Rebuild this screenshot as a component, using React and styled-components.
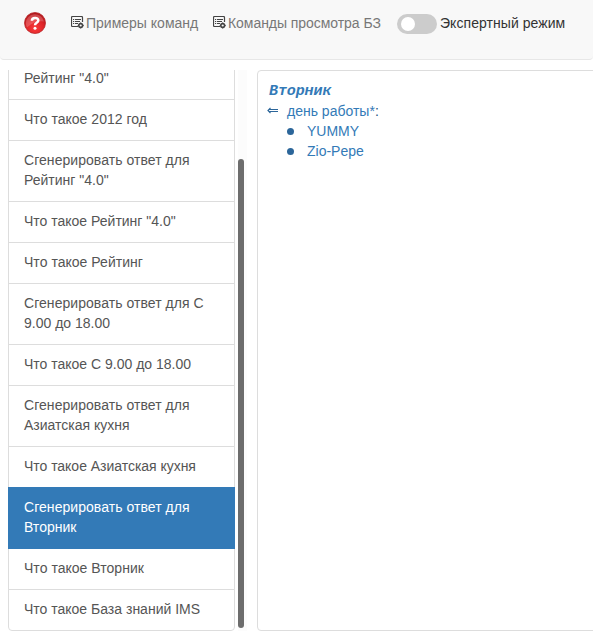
import React from 'react';
import styled, { createGlobalStyle } from 'styled-components';

const GlobalStyle = createGlobalStyle`
  * { box-sizing: border-box; }
  body {
    margin: 0;
    overflow: hidden;
    background: #fff;
    color: #333;
    font: 14px/20px "Helvetica Neue", "Liberation Sans", Arial, sans-serif;
  }
`;

const Page = styled.div`
  width: 593px;
  height: 641px;
  overflow: hidden;
`;

const Navbar = styled.header`
  display: flex;
  align-items: flex-start;
  height: 60px;
  padding: 12px 0 0 24px;
  background: #f8f8f8;
  border-bottom: 1px solid #e7e7e7;
  border-radius: 0 0 4px 4px;
  white-space: nowrap;
`;

const HelpIcon = styled.svg`
  width: 22px;
  height: 22px;
  flex: none;
  margin-right: 25px;
`;

const NavLink = styled.a`
  display: flex;
  flex: none;
  width: ${(p) => p.$width}px;
  margin-top: 1px;
  color: #777;
  letter-spacing: ${(p) => p.$spacing || 0}px;
`;

const CommandIcon = styled.svg`
  width: 13px;
  height: 13px;
  flex: none;
  margin: 3px 2px 0 0;
`;

const Switch = styled.span`
  flex: none;
  width: 40px;
  height: 20px;
  margin: 2px 3px 0 0;
  padding: 3px 4px;
  border-radius: 10px;
  background: #ccc;
`;

const Knob = styled.span`
  display: block;
  width: 14px;
  height: 14px;
  border-radius: 50%;
  background: #fff;
`;

const SwitchLabel = styled.span`
  margin-top: 1px;
  letter-spacing: 0.06px;
`;

const Content = styled.main`
  display: flex;
  height: 561px;
  margin-top: 10px;
  padding-left: 8px;
`;

const History = styled.div`
  display: flex;
  flex-direction: column;
  justify-content: flex-end;
  flex: none;
  width: 227px;
  height: 561px;
  overflow: hidden;
`;

const HistoryItem = styled.a`
  flex: none;
  padding: 9px 15px 11px;
  border: 1px solid ${(p) => (p.$active ? '#337ab7' : '#ddd')};
  background: ${(p) => (p.$active ? '#337ab7' : '#fff')};
  color: ${(p) => (p.$active ? '#fff' : '#555')};
  position: relative;
  z-index: ${(p) => (p.$active ? 2 : 0)};
  white-space: nowrap;
  & + & { margin-top: -1px; }
  &:last-child { border-radius: 0 0 4px 4px; }
`;

const Line = styled.span`
  display: block;
  letter-spacing: ${(p) => p.$spacing || 0}px;
`;

const ScrollTrack = styled.div`
  flex: none;
  width: 9px;
  height: 561px;
  margin-left: 3px;
  padding-top: 89px;
  background: #fcfcfc;
`;

const ScrollThumb = styled.div`
  width: 6px;
  height: 469px;
  border-radius: 3px;
  background: #6d6d6d;
`;

const Answer = styled.section`
  flex: none;
  width: 360px;
  margin-left: 10px;
  padding: 11px 9px;
  border: 1px solid #ddd;
  border-radius: 4px;
`;

const Title = styled.a`
  display: block;
  height: 19px;
  padding-left: 2px;
  color: #337ab7;
  font: italic bold 15px/20px "Liberation Mono", monospace;
  letter-spacing: -0.1px;
`;

const Relation = styled.div`
  display: flex;
  color: #337ab7;
`;

const Arrow = styled.svg`
  width: 11px;
  height: 7px;
  margin: 6px 9px 0 0;
`;

const Colon = styled.span`
  color: #23527c;
`;

const Values = styled.ul`
  margin: 0;
  padding: 0 0 0 20px;
  list-style: none;
`;

const Value = styled.li`
  display: flex;
  align-items: center;
  color: #337ab7;
  &::before {
    content: '';
    width: 7px;
    height: 7px;
    margin-right: 13px;
    border-radius: 50%;
    background: #2c669a;
  }
`;

const history = [
  { lines: ['Рейтинг "4.0"'] },
  { lines: ['Что такое 2012 год'], spacing: 0.03 },
  { lines: ['Сгенерировать ответ для', 'Рейтинг "4.0"'], spacing: 0.05 },
  { lines: ['Что такое Рейтинг "4.0"'] },
  { lines: ['Что такое Рейтинг'], spacing: 0.03 },
  { lines: ['Сгенерировать ответ для С', '9.00 до 18.00'], spacing: 0.05 },
  { lines: ['Что такое С 9.00 до 18.00'] },
  { lines: ['Сгенерировать ответ для', 'Азиатская кухня'], spacing: 0.05 },
  { lines: ['Что такое Азиатская кухня'], spacing: -0.03 },
  { lines: ['Сгенерировать ответ для', 'Вторник'], spacing: 0.05, active: true },
  { lines: ['Что такое Вторник'], spacing: 0.03 },
  { lines: ['Что такое База знаний IMS'] },
];

const ListCog = () => (
  <CommandIcon viewBox="0 0 13 13" fill="none" stroke="#444">
    <path d="M7 10.5H1.500a1 1 0 0 1-1-1v-8a1 1 0 0 1 1-1h9a1 1 0 0 1 1 1V6" strokeWidth="1.200" />
    <path d="M2 3.500h1.200M4 3.500h6M2 5.500h1.200M4 5.500h5M2 7.500h1.200M4 7.500h3" strokeWidth="1.100" />
    <circle cx="9.700" cy="9.500" r="1.900" strokeWidth="1.600" />
    <path d="M9.700 6.500v1M9.700 11.500v1M6.700 9.500h1M11.700 9.500h1" />
  </CommandIcon>
);

export default function App() {
  return (
    <>
      <GlobalStyle />
      <Page>
        <Navbar>
          <HelpIcon viewBox="0 0 22 22">
            <defs>
              <radialGradient id="ball" cx="50%" cy="75%" r="75%">
                <stop offset="0" stopColor="#fa3a3a" />
                <stop offset=".55" stopColor="#df2529" />
                <stop offset="1" stopColor="#a91419" />
              </radialGradient>
            </defs>
            <circle cx="11" cy="11" r="10.500" fill="url(#ball)" stroke="#b92a2c" strokeWidth=".8" />
            <path d="M1.800 11a9.200 9.200 0 0 1 18.200-1.500Q11 8 3 15.500Q1.800 13.500 1.800 11Z" fill="#fff" opacity=".2" />
            <path d="M7.900 8.800C7.900 5 14.300 5 14.300 8.500C14.300 10.900 11 10.700 11 13.200" fill="none" stroke="#fff" strokeWidth="2.500" />
            <circle cx="11" cy="16.200" r="1.500" fill="#fff" />
          </HelpIcon>
          <NavLink $width={142}><ListCog />Примеры команд</NavLink>
          <NavLink $width={184} $spacing={-0.05}><ListCog />Команды просмотра БЗ</NavLink>
          <Switch><Knob /></Switch>
          <SwitchLabel>Экспертный режим</SwitchLabel>
        </Navbar>
        <Content>
          <History>
            {history.map((item, i) => (
              <HistoryItem key={i} $active={item.active}>
                {item.lines.map((line, n) => (
                  <Line key={line} $spacing={n === 0 ? item.spacing : 0}>{line}</Line>
                ))}
              </HistoryItem>
            ))}
          </History>
          <ScrollTrack><ScrollThumb /></ScrollTrack>
          <Answer>
            <Title>Вторник</Title>
            <Relation>
              <Arrow viewBox="0 0 11 7" fill="none" stroke="#2c669a" strokeWidth="1.200">
                <path d="M2.500 2.500H11M2.500 4.500H11M3.500 .8L1 3.500L3.500 6.200" />
              </Arrow>
              день работы*<Colon>:</Colon>
            </Relation>
            <Values>
              <Value>YUMMY</Value>
              <Value>Zio-Pepe</Value>
            </Values>
          </Answer>
        </Content>
      </Page>
    </>
  );
}
